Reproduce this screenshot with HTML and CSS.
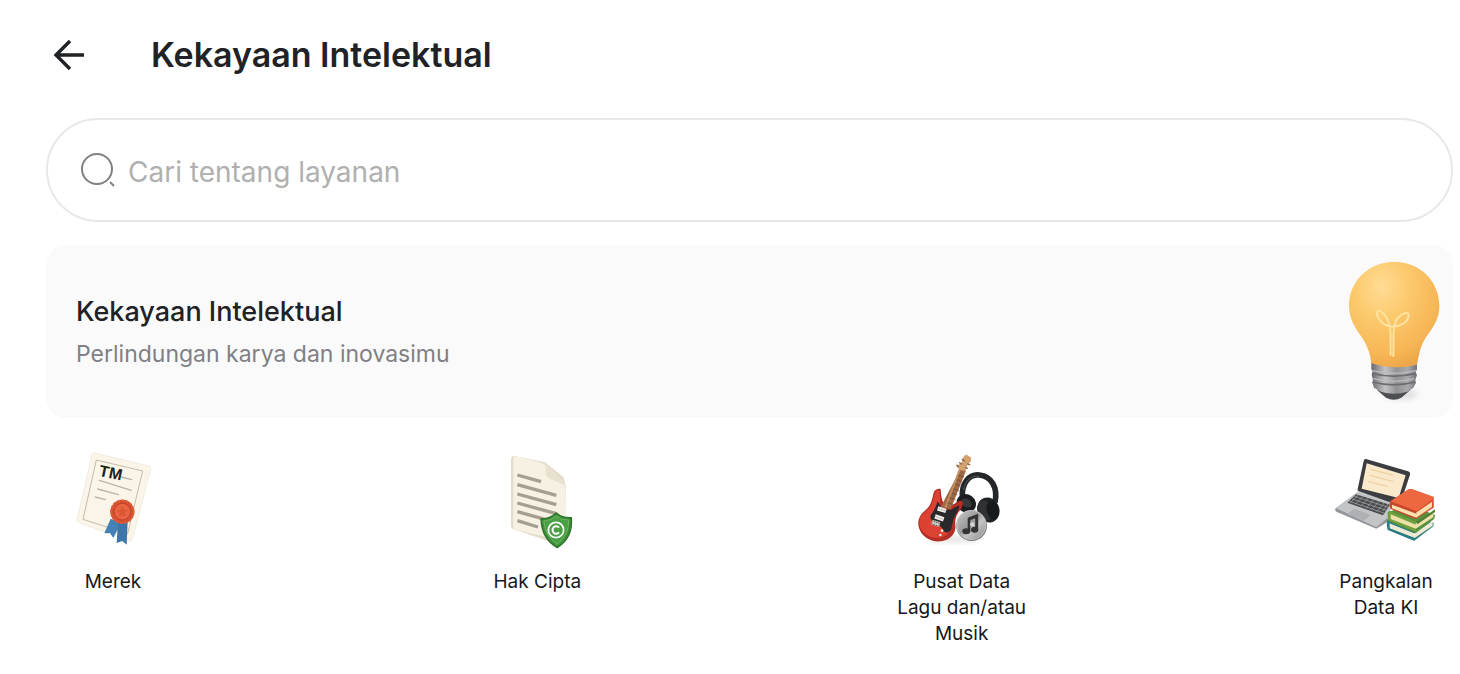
FILE: index.html
```html
<!DOCTYPE html>
<html lang="id">
<head>
    <meta charset="UTF-8">
    <meta name="viewport" content="width=device-width, initial-scale=1.0">
    <title>Kekayaan Intelektual</title>
    <link rel="stylesheet" href="styles.css">
</head>
<body>
    <header class="topbar">
        <button class="back" type="button" aria-label="Kembali">
            <svg width="32" height="32" viewBox="0 0 32 32" fill="none" stroke="#212225" stroke-width="3.4">
                <path d="M31 16H4M17 2 3 16l14 14"/>
            </svg>
        </button>
        <h1>Kekayaan Intelektual</h1>
    </header>

    <main>
        <form class="search" role="search">
            <svg width="36" height="36" viewBox="0 0 36 36" fill="none" stroke="#808083" stroke-width="2">
                <circle cx="17" cy="17" r="15"/>
                <path d="m30 30 4 4"/>
            </svg>
            <input type="search" aria-label="Cari tentang layanan" placeholder="Cari tentang layanan">
        </form>

        <section class="banner">
            <div>
                <h2>Kekayaan Intelektual</h2>
                <p>Perlindungan karya dan inovasimu</p>
            </div>
            <svg class="bulb" viewBox="45 58 300 435" aria-hidden="true">
                <defs>
                    <radialGradient id="glass" cx=".36" cy=".24" r=".85">
                        <stop offset="0" stop-color="#ffdc94"/>
                        <stop offset=".35" stop-color="#fcca6e"/>
                        <stop offset=".75" stop-color="#f6b656"/>
                        <stop offset="1" stop-color="#e9a044"/>
                    </radialGradient>
                    <linearGradient id="metal">
                        <stop offset="0" stop-color="#68696d"/>
                        <stop offset=".3" stop-color="#c3c3c6"/>
                        <stop offset=".55" stop-color="#929296"/>
                        <stop offset=".8" stop-color="#aaaaae"/>
                        <stop offset="1" stop-color="#707176"/>
                    </linearGradient>
                    <filter id="soft" x="-40%" y="-40%" width="180%" height="180%">
                        <feGaussianBlur stdDeviation="9"/>
                    </filter>
                </defs>
                <ellipse cx="215" cy="464" rx="48" ry="14" fill="#dcdcde" filter="url(#soft)"/>
                <path d="M140 450q50 14 102 0l-28 24q-22 12-46 0z" fill="#4d4e51"/>
                <path d="M124 365h137v23l-4 10 4 8-5 15 2 8-8 15-18 12q-40 12-80 0l-20-12-5-15 2-8-4-15 3-10-4-8z" fill="url(#metal)"/>
                <path d="M126 401q65 17 132 0M128 427q62 17 127 0" fill="none" stroke="#6c6d71" stroke-width="5"/>
                <path d="M128 393q65 16 130 0M131 417q60 16 122 0" fill="none" stroke="#bcbcc0" stroke-width="4"/>
                <path d="M193 66c76 0 135 58 135 132 0 51-31 77-47 107-12 22-14 43-20 70q-68 18-137-4c-3-27-10-45-21-66-18-31-46-58-46-107C57 124 117 66 193 66z" fill="url(#glass)"/>
                <path d="M182 345c-1-46 2-75-4-93-6-20-26-43-34-38-9 6 4 38 33 46 29 5 59-12 59-33 0-14-22-6-34 10-16 21-10 57-12 112" fill="none" stroke="#ffe3a0" stroke-width="6" stroke-linecap="round"/>
            </svg>
        </section>

        <nav class="services" aria-label="Layanan">
            <a href="#merek">
                <svg viewBox="9 36 300 300" aria-hidden="true">
                    <path d="M104 39 267 78q6 2 5 9l-55 211q-2 7-9 5L56 248q-6-2-5-8L96 44q2-6 8-5z" fill="#faf5e8" stroke="#ece5d4" stroke-width="2"/>
                    <path d="m109 60 139 33-45 188-134-43z" fill="none" stroke="#c4bba9" stroke-width="3"/>
                    <path d="m184 111 31 8M118 121l96 30M113 147l62 17M106 171l30 8" stroke="#bbb4a6" stroke-width="4" stroke-linecap="round"/>
                    <text class="tm" x="0" y="0" transform="translate(115 107) rotate(12)">TM</text>
                    <path d="m152 236 31 12-23 46-10-15-17 1z" fill="#4481b6"/>
                    <path d="m174 245 29-2-3 71-13-11-17 6z" fill="#3d76aa"/>
                    <circle cx="187" cy="215" r="36" fill="#d4502f"/>
                    <circle cx="187" cy="215" r="34" fill="none" stroke="#df6140" stroke-width="5" stroke-dasharray="9 4"/>
                    <circle cx="187" cy="215" r="25" fill="#e96442" stroke="#bd4027" stroke-width="3"/>
                    <path d="m187 198 5 11 12 1-9 9 3 12-11-6-11 6 3-12-9-9 12-1z" fill="#dc5733"/>
                </svg>
                <span>Merek</span>
            </a>
            <a href="#hak-cipta">
                <svg viewBox="-9 36 300 300" aria-hidden="true">
                    <path d="M74 48q-11-1-11 12v197q0 8 8 11l103 35q15 4 50-20l4-143-8-29-55-44z" fill="#e4dcca"/>
                    <path d="M80 49l82 22q7 2 12 10l48 52q5 6 5 14v139q0 18-19 14L78 270q-8-2-8-11V57q0-9 10-8z" fill="#f7f1e3"/>
                    <path d="M160 71q8 4 7 22-1 17 14 24l43 18q4 3-3-9l-45-48q-6-7-16-7z" fill="#e9e1cf"/>
                    <path d="m82 105 71 20M82 134l117 32M82 162l117 32M82 189l117 32M82 215l86 24M82 242l62 19" stroke="#a69e91" stroke-width="10"/>
                    <path d="m199 219q19 16 45 14 6 60-42 90-47-26-49-86 27 0 46-18z" fill="#3d8e37" stroke="#2b742b" stroke-width="4"/>
                    <path d="M199 228q17 13 37 12 2 46-35 73-36-24-40-70 21-1 38-15z" fill="#4aa044" stroke="#8abf78" stroke-width="2"/>
                    <circle cx="198" cy="270" r="23" fill="none" stroke="#fff" stroke-width="5"/>
                    <path d="M207 263a11 11 0 1 0 0 14" fill="none" stroke="#fff" stroke-width="6"/>
                </svg>
                <span>Hak Cipta</span>
            </a>
            <a href="#musik">
                <svg viewBox="21 36 300 300" aria-hidden="true">
                    <defs>
                        <linearGradient id="disc" x2="1" y2="1">
                            <stop offset="0" stop-color="#c9c9c9"/>
                            <stop offset=".45" stop-color="#999"/>
                            <stop offset=".6" stop-color="#c4c4c4"/>
                            <stop offset="1" stop-color="#888"/>
                        </linearGradient>
                    </defs>
                    <ellipse cx="145" cy="298" rx="80" ry="9" fill="#e0dedd" filter="url(#soft)"/>
                    <path d="M172 174c-3-45 20-72 51-69 37 4 56 37 47 82" fill="none" stroke="#252629" stroke-width="17"/>
                    <path d="M176 150c5-29 23-45 46-41" fill="none" stroke="#55565a" stroke-width="3"/>
                    <ellipse cx="184" cy="190" rx="30" ry="27" fill="#1c1d20" transform="rotate(35 184 190)"/>
                    <ellipse cx="185" cy="189" rx="17" ry="12" fill="#36373a" transform="rotate(35 185 189)"/>
                    <ellipse cx="250" cy="210" rx="33" ry="38" fill="#202124" transform="rotate(-20 250 210)"/>
                    <ellipse cx="240" cy="211" rx="21" ry="31" fill="#303135" transform="rotate(-20 240 211)"/>
                    <ellipse cx="263" cy="211" rx="18" ry="28" fill="#18191b" transform="rotate(-15 263 211)"/>
                    <path d="M107 147c-11-4-20 4-22 14-3 18-9 38-23 49-19 15-26 34-20 54 8 27 40 45 70 39 26-5 43-26 39-50-2-17 4-30 15-44 9-11 10-23 4-26-11-5-23 13-34 15-22 3-27-17-29-51z" fill="#b52e25"/>
                    <path d="M103 150c-9 0-14 6-15 15-4 23-12 40-27 50-16 12-20 27-16 44 7 24 33 38 57 34 25-3 38-20 35-43-2-17 7-29 19-42-20 11-46 5-50-14z" fill="#dc4132"/>
                    <path d="M98 184q-7 24-21 42-4 13 13 20l17 13 12 17q13 5 20-10l6-27 16-33q5-9-2-9l-23 13-24-3z" fill="#29292b"/>
                    <path d="m169 83 14 9-46 116-30-7z" fill="#9c6846"/>
                    <path d="m166 84-45 119" stroke="#c58e61" stroke-width="6"/>
                    <path d="m160 106 16 5m-21 8 16 5m-21 8 16 5m-21 9 17 6m-22 7 17 6m-24 8 19 6m-25 9 22 7" stroke="#684430" stroke-width="2"/>
                    <path d="m163 89-10-13 15-4 7-20q6-12 15-5l9 6-2 12-10 9-6 20z" fill="#d5a16f"/>
                    <path d="m155 76 5 4m4-12 5 4m3-14 6 4m10 10 6 2m-12 9 5 2" stroke="#876348" stroke-width="4" stroke-linecap="round"/>
                    <path d="m98 205 25 8M90 229l26 9" stroke="#f4eee8" stroke-width="13"/>
                    <path d="m101 206 21 7m-30 17 22 8" stroke="#8b8580" stroke-width="3" stroke-dasharray="3 3"/>
                    <path d="m80 246 24 8" stroke="#c9c5c1" stroke-width="15"/>
                    <path d="m80 242 24 8m-25 1 22 8" stroke="#58504d" stroke-width="3" stroke-dasharray="4 3"/>
                    <circle cx="111" cy="272" r="4" fill="#ece8df"/>
                    <circle cx="106" cy="285" r="4" fill="#ece8df"/>
                    <circle cx="200" cy="257" r="46" fill="#777"/>
                    <circle cx="199" cy="255" r="44" fill="url(#disc)" stroke="#d2d2d2" stroke-width="2"/>
                    <path d="m191 237 24-9v40" fill="none" stroke="#343434" stroke-width="9"/>
                    <path d="M192 234v40" stroke="#343434" stroke-width="8"/>
                    <ellipse cx="184" cy="274" rx="12" ry="9" fill="#343434"/>
                    <ellipse cx="209" cy="269" rx="11" ry="9" fill="#343434"/>
                    <circle cx="201" cy="253" r="6" fill="#d8d8d8"/>
                </svg>
                <span>Pusat Data Lagu dan/atau Musik</span>
            </a>
            <a href="#pangkalan-data">
                <svg viewBox="33 36 300 300" aria-hidden="true">
                    <path d="m31 206 69-51q50 14 99 34l-8 55-37 22-120-51q-5-3-3-9z" fill="#929599"/>
                    <path d="m32 204 69-50 96 33-3 42-40 33z" fill="#c2c4c7"/>
                    <path d="m93 163 102 31-21 32-107-38z" fill="#494b4f"/>
                    <path d="m88 169 102 33m-109-25 103 34m-111-27 104 35" stroke="#b2b4b7" stroke-width="2"/>
                    <path d="m101 164-25 24m39-20-24 25m40-20-24 26m40-21-24 27m40-22-24 27m39-22-23 27m35-25-16 23" stroke="#a8aaad" stroke-width="2"/>
                    <path d="m88 206 49 19-20 17-51-20z" fill="#aeb0b4"/>
                    <path d="M123 57 249 94q8 2 6 10l-19 57-37 27-97-34q-6-2-4-7l18-84q1-7 7-6z" fill="#3b3d41"/>
                    <path d="m125 70 117 36-21 68-111-28z" fill="#fbe9cb"/>
                    <path d="m137 88 65 17m-67 1 71 19m-75 0 56 14" stroke="#efd2a3" stroke-width="4" stroke-linecap="round"/>
                    <path d="m187 243 71-25 68 31-1 10-57 43-80-33z" fill="#31817c"/>
                    <path d="m193 248 76 32 54-38v15l-54 37-75-29z" fill="#eee8d4"/>
                    <path d="m187 240 81 32v8l-75-30v16l75 28v8l-80-33q-5-15-1-29z" fill="#287d86"/>
                    <path d="m188 217 65-23 77 31-2 11-56 43-82-35z" fill="#58913d"/>
                    <path d="m195 220 77 30 53-35v17l-54 35-75-28z" fill="#eee0a9"/>
                    <path d="m191 212 81 33v9l-75-31v14l75 29v9l-82-35q-4-13 1-28z" fill="#71a13d"/>
                    <path d="m274 247 56-39v8l-53 37z" fill="#507f33"/>
                    <path d="m196 184 55-36q5-2 11 0l64 23v32l-54 34-75-31q-6-9-1-22z" fill="#d74d2a"/>
                    <path d="m201 192 74 25 46-32v16l-48 32-74-27z" fill="#f7dfaf"/>
                    <path d="m196 184 55-36q5-2 11 0l62 22q5 2 1 7l-52 38z" fill="#ed6840"/>
                    <path d="m197 184 77 29v8l-73-27v11l72 28v5l-76-32q-5-12 0-22z" fill="#ca4628"/>
                </svg>
                <span>Pangkalan Data KI</span>
            </a>
        </nav>
    </main>
</body>
</html>
```

FILE: styles.css
```css
* {
    box-sizing: border-box;
}
body {
    margin: 0;
    padding: 0 7px 24px 46px;
    background: #fff;
    color: #212225;
    font-family: Inter, "Liberation Sans", sans-serif;
}
h1, h2, p {
    margin: 0;
}
.topbar {
    display: flex;
    align-items: center;
    gap: 66px;
    height: 118px;
    padding: 0 0 8px 7px;
}
.back {
    display: flex;
    padding: 0;
    border: none;
    background: none;
    cursor: pointer;
}
h1 {
    font-size: 34px;
    line-height: 40px;
    font-weight: 600;
}
.search {
    display: flex;
    align-items: center;
    gap: 12px;
    height: 104px;
    padding: 0 32px;
    border: 2px solid #e8e8e8;
    border-radius: 52px;
}
.search input {
    flex: 1;
    min-width: 0;
    padding: 4px 0 0;
    border: none;
    outline: none;
    background: none;
    color: #212225;
    font-family: inherit;
    font-size: 28px;
}
.search input::placeholder {
    color: #b0b0b0;
    opacity: 1;
}
.banner {
    display: flex;
    align-items: center;
    justify-content: space-between;
    margin-top: 23px;
    padding: 14px 8px 14px 30px;
    border-radius: 20px;
    background: #fafafa;
}
h2 {
    font-size: 27px;
    line-height: 40px;
    font-weight: 500;
}
.banner p {
    margin-top: 4px;
    color: #808084;
    font-size: 23px;
    line-height: 36px;
}
.bulb {
    width: 100px;
    height: 145px;
}
.services {
    display: flex;
    justify-content: space-between;
    margin-top: 34px;
}
.services a {
    display: flex;
    flex-direction: column;
    align-items: center;
    gap: 17px;
    width: 134px;
    color: #17181a;
    font-size: 19px;
    line-height: 26px;
    text-align: center;
    text-decoration: none;
}
.services svg {
    width: 100px;
    height: 100px;
    overflow: visible;
}
.tm {
    fill: #222;
    font-family: "Liberation Sans", sans-serif;
    font-size: 48px;
    font-weight: bold;
}
```
